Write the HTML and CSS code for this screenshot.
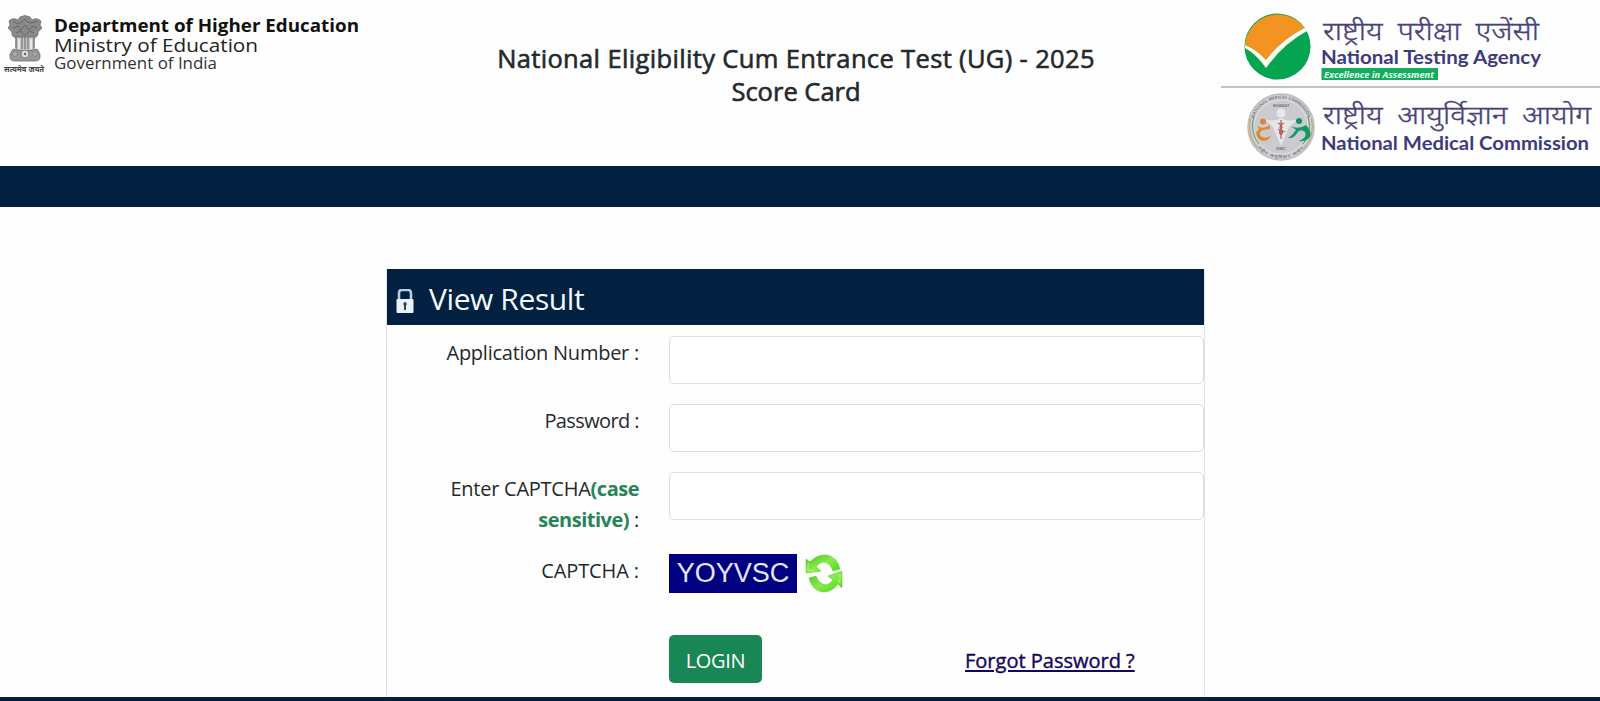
FILE: index.html
```
<!DOCTYPE html>
<html lang="en">
<head>
    <meta charset="UTF-8">
    <meta name="viewport" content="width=device-width, initial-scale=1.0">
    <title>NEET (UG) - 2025 Score Card</title>
    <link rel="stylesheet" href="styles.css">
</head>
<body>
    <!-- Header -->
    <header class="header">
        <svg class="ministry-logo" width="380" height="90" viewBox="0 0 380 90">
            <g stroke="#666" stroke-width="0.7">
                <path fill="#8a8a8a" d="M20 17q5-3 10 0l2 3q5-3 9 1l-1 4 2 3-4 4q1 5-5 6H17q-6-1-5-6l-4-4 2-3-1-4q4-4 9-1z"/>
                <path fill="#c5c5c5" d="M16 37h18v14H16z"/>
                <path fill="#999" d="M13 49q12 4 24 0l3 5v3q0 4-5 4H15q-5 0-5-4v-3z"/>
                <circle fill="#ddd" cx="25" cy="54" r="4"/>
            </g>
            <path stroke="#666" stroke-width="1" fill="none" d="M13 21q4 4 7 2t5-4q2 4 5 4t7-2M13 28l5-2 3 4 4-5 4 5 3-4 5 2M16 33l4-2 5 4 5-4 4 2"/>
            <path stroke="#eee" stroke-width="1.6" d="M19 39v10M31 39v10"/>
            <path stroke="#777" stroke-width="1.2" d="M22 37v12M25 36v13M28 37v12M16 38v10M34 38v10"/>
            <circle fill="#666" cx="25" cy="54" r="1.2"/>
            <g fill="#aaa" stroke="#777" stroke-width="0.6"><circle cx="15" cy="54" r="2.5"/><circle cx="35" cy="54" r="2.5"/></g>
            <text class="motto" x="4" y="72" textLength="40" lengthAdjust="spacingAndGlyphs">सत्यमेव जयते</text>
            <text class="dept" x="54" y="32" textLength="305" lengthAdjust="spacingAndGlyphs">Department of Higher Education</text>
            <text class="ministry" x="54" y="52" textLength="204" lengthAdjust="spacingAndGlyphs">Ministry of Education</text>
            <text class="govt" x="54" y="69" textLength="163" lengthAdjust="spacingAndGlyphs">Government of India</text>
        </svg>

        <h1 class="exam-title">National Eligibility Cum Entrance Test (UG) - 2025<br><span>Score Card</span></h1>

        <div class="agency-logos">
            <svg width="379" height="86" viewBox="1221 0 379 86">
                <circle cx="1277.500" cy="46.500" r="33" fill="#05a451"/>
                <path fill="#f39322" d="M1245 45A33 33 0 0 1 1304.500 28Q1281 40 1266 60Q1257 50 1245 45Z"/>
                <path fill="#fffdf0" d="M1245 45Q1257 50 1266 60Q1281 40 1304.500 28L1307 31Q1283 44 1266 68Q1256 54 1245 48Z"/>
                <text class="hindi" x="1323" y="40" textLength="216" lengthAdjust="spacingAndGlyphs">राष्ट्रीय परीक्षा एजेंसी</text>
                <text class="agency" x="1321" y="64" textLength="220" lengthAdjust="spacingAndGlyphs">National Testing Agency</text>
                <path fill="#12ad5c" d="M1321.500 68H1438v12H1321.500z"/>
                <text class="tagline" x="1324" y="77.500" textLength="110" lengthAdjust="spacingAndGlyphs">Excellence in Assessment</text>
            </svg>
            <svg class="nmc-logo" width="379" height="78" viewBox="1221 88 379 78">
                <circle cx="1281" cy="127" r="33" fill="#d0d0d3" stroke="#bcbdc1" stroke-width="1.500"/>
                <circle cx="1281" cy="127" r="27" fill="#cacacf" stroke="#eee" stroke-width="0.500"/>
                <path fill="none" stroke="#c9a66b" stroke-width="1.200" d="M1251 118a31 31 0 0 0 7 30M1311 118a31 31 0 0 1-7 30"/>
                <path fill="none" stroke="#4f9c70" stroke-width="1" d="M1254 117a28 28 0 0 0 5 27M1308 117a28 28 0 0 1-5 27"/>
                <path id="ring-top" fill="none" d="M1252.500 127A28.500 28.500 0 0 1 1309.500 127"/>
                <path id="ring-bottom" fill="none" d="M1258 148A31 31 0 0 0 1304 148"/>
                <text class="ring"><textPath href="#ring-top" startOffset="9" textLength="71">NATIONAL MEDICAL COMMISSION</textPath></text>
                <text class="ring"><textPath href="#ring-bottom" textLength="51">राष्ट्रीय आयुर्विज्ञान आयोग</textPath></text>
                <text class="ring" x="1273" y="107">BHARAT</text>
                <text class="ring" x="1276" y="150">NMC</text>
                <circle cx="1281" cy="113" r="4.500" fill="#e8e8ea"/>
                <path fill="#e6e6e8" d="M1263 118q9 5 18 0 9 5 18 0l-10 9-5 12-3 7-3-7-5-12z"/>
                <path fill="none" stroke="#ad655d" stroke-width="1.300" d="M1281 120v19M1278 123q6 3 3 6t0 6M1284 123q-6 3-3 6t0 6M1278 129l7 3"/>
                <circle cx="1263" cy="121.500" r="3" fill="#dd8532"/>
                <path fill="#df8832" d="M1257 126Q1263 130 1270 125V129Q1258 130 1260 135Q1263 140 1271 136Q1267 143 1260 140Q1253 134 1259 129Z"/>
                <circle cx="1299" cy="121" r="3" fill="#0e935e"/>
                <path fill="#179765" d="M1291 126Q1298 130 1306 125Q1314 134 1308 139Q1304 142 1299 141Q1308 137 1305 132Q1300 128 1297 133Q1294 139 1288 138Q1293 135 1296 130Z"/>
                <text class="hindi" x="1323" y="124" textLength="268" lengthAdjust="spacingAndGlyphs">राष्ट्रीय आयुर्विज्ञान आयोग</text>
                <text class="agency" x="1321" y="149.500" textLength="268" lengthAdjust="spacingAndGlyphs">National Medical Commission</text>
            </svg>
        </div>
    </header>
    <div class="navbar"></div>

    <!-- Login form -->
    <main class="main">
        <div class="card">
            <div class="card-header">
                <svg width="18" height="24" viewBox="0 0 18 24">
                    <path d="M3 12V4q0-3 3-3h6q3 0 3 3v8" fill="none" stroke="#b9cbe1" stroke-width="2.600"/>
                    <rect x="0.500" y="10" width="17" height="14" rx="1" fill="#eaf1f8"/>
                    <path d="M9 13a2 2 0 0 1 1 3.500V21H8v-4.500A2 2 0 0 1 9 13z" fill="#34424f"/>
                </svg>
                <h2>View Result</h2>
            </div>
            <form class="form">
                <label for="appno">Application Number :</label>
                <input type="text" id="appno">

                <label class="lbl-password" for="password">Password :</label>
                <input type="password" id="password">

                <label for="captcha">Enter CAPTCHA<b>(case<br>sensitive)</b> :</label>
                <input type="text" id="captcha">

                <label class="lbl-captcha">CAPTCHA :</label>
                <div class="captcha-row">
                    <div class="captcha-image"><span>YOYVSC</span></div>
                    <svg width="39" height="39" viewBox="0 0 39 39">
                        <defs>
                            <linearGradient id="green" x1="0" y1="0" x2="1" y2="1">
                                <stop offset="0" stop-color="#43bf20"/>
                                <stop offset="0.500" stop-color="#8bea4f"/>
                                <stop offset="1" stop-color="#42d90d"/>
                            </linearGradient>
                        </defs>
                        <path fill="url(#green)" stroke="#55ca27" stroke-width="0.500" d="M1 5L5 8Q12 0 22 1Q32 3 35 15L28 17Q25 8 18 8Q14 9 11 13L16 17L1 19Z"/>
                        <path fill="url(#green)" stroke="#55ca27" stroke-width="0.500" d="M37 17V34L33 30Q26 39 17 38Q7 36 4 24L11 22Q14 30 21 31Q25 30 28 26L23 22Z"/>
                        <path fill="none" stroke="#b8fa78" stroke-width="1" d="M3 9V17L10 16M35 20V29L32 25"/>
                    </svg>
                </div>

                <div class="actions">
                    <button type="button"><span>LOGIN</span></button>
                    <a href="#">Forgot Password ?</a>
                </div>
            </form>
        </div>
    </main>
    <footer class="footer"></footer>
</body>
</html>
```
FILE: styles.css
```
* {
    box-sizing: border-box;
}

body {
    font-family: "Open Sans", "Noto Sans", sans-serif;
    background: #fefefe;
    color: #24292d;
    margin: 0;
    height: 701px;
    display: flex;
    flex-direction: column;
    overflow: hidden;
}

.header {
    height: 166px;
    display: grid;
    grid-template-columns: 380px 1fr 379px;
    flex: none;
}

.header svg {
    display: block;
}

.motto {
    font-size: 8px;
    font-weight: bold;
    fill: #444;
}

.dept {
    font-size: 17px;
    font-weight: bold;
    fill: #111;
}

.ministry {
    font-size: 18.5px;
    fill: #222;
}

.govt {
    font-size: 15.5px;
    fill: #333;
}

.exam-title {
    margin: 42px 0 0;
    padding-right: 9px;
    font-size: 25.5px;
    font-weight: 500;
    line-height: 33px;
    letter-spacing: 0.35px;
    text-align: center;
    white-space: nowrap;
    -webkit-text-stroke: 0.6px #24292d;
}

.exam-title span {
    letter-spacing: 0;
}

.agency-logos > svg:first-child {
    border-bottom: 2px solid #c5c3c5;
    height: 88px;
}

.hindi {
    font-size: 26px;
    font-weight: 300;
    word-spacing: 6px;
    fill: #46437a;
    stroke: #46437a;
    stroke-width: 0.3px;
}

.agency {
    font-family: Lato, sans-serif;
    font-size: 19px;
    font-weight: bold;
    fill: #3d3b7d;
}

.tagline {
    font-size: 8.5px;
    font-weight: bold;
    font-style: italic;
    fill: #e8fff0;
}

.ring {
    font-size: 4px;
    font-weight: bold;
    fill: #777984;
}

.navbar {
    height: 41px;
    background: #02203f;
    flex: none;
}

.main {
    height: 490px;
    padding: 62px 395px 0 386px;
    flex: none;
}

.card {
    height: 428px;
    border: 1px solid #e1e3e5;
    border-width: 0 1px;
}

.card-header {
    height: 56px;
    padding-left: 9px;
    background: #02203f;
    color: #f2fbff;
    display: flex;
    align-items: center;
    gap: 15px;
}

.card-header svg {
    margin-top: 7px;
}

.card-header h2 {
    margin: 3px 0 0;
    font-size: 30px;
    font-weight: 400;
    line-height: 40px;
    letter-spacing: -0.4px;
}

.form {
    padding-top: 11px;
    display: grid;
    grid-template-columns: 252px 535px;
    column-gap: 30px;
    row-gap: 20px;
    font-size: 20px;
    line-height: 31px;
}

.form label {
    padding-top: 1px;
    margin-bottom: -1px;
    letter-spacing: -0.25px;
    text-align: right;
    white-space: nowrap;
}

.form .lbl-password {
    letter-spacing: -0.6px;
}

.form .lbl-captcha {
    letter-spacing: -0.1px;
}

.form b {
    color: #278458;
    letter-spacing: -0.5px;
}

.form input {
    width: 100%;
    height: 48px;
    padding: 8px 12px;
    border: 1px solid #dddfe1;
    border-radius: 5px;
    background: #fff;
    font: inherit;
}

.captcha-row {
    height: 61px;
    display: flex;
    gap: 8px;
}

.captcha-image {
    width: 128px;
    height: 39px;
    background: #000080;
    color: #e4e4fa;
    font-family: "Liberation Sans", Arial, sans-serif;
    font-size: 27px;
    line-height: 39px;
    text-align: center;
}

.actions {
    grid-column: 2;
    display: flex;
    align-items: center;
}

.actions button {
    width: 93px;
    height: 48px;
    padding: 2px 0 0;
    border: none;
    border-radius: 5px;
    background: #198754;
    color: #fff;
    font: inherit;
    letter-spacing: -0.3px;
    cursor: pointer;
}

.actions a {
    margin: 2px 0 0 203px;
    color: #120760;
    font-weight: 500;
    text-underline-offset: 2px;
    text-decoration-thickness: 2px;
    -webkit-text-stroke: 0.4px #120760;
}

.footer {
    height: 4px;
    background: #02203f;
}
```
